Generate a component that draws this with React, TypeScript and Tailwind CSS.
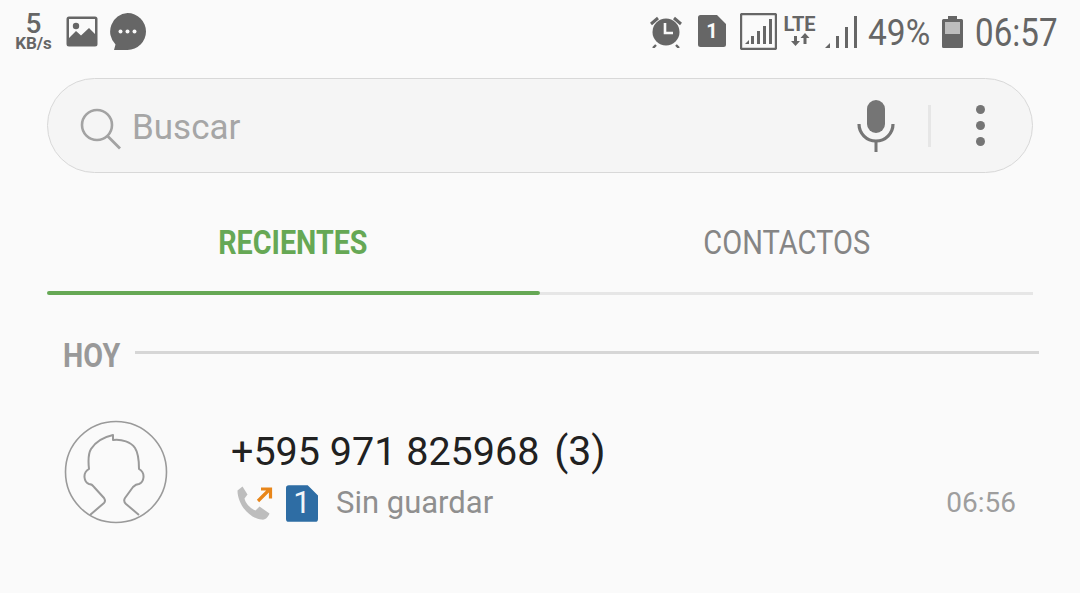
import React from 'react';

const grey = '#666666';

const ImageIcon = () => (
	<svg width="32" height="31" viewBox="0 0 32 31">
		<rect x="0.5" y="0.5" width="31" height="30" rx="2.5" fill={grey} />
		<rect x="3" y="3" width="26" height="22" fill="#fafafa" />
		<circle cx="10" cy="10" r="3.2" fill={grey} />
		<path d="M3 22 L10 15 L15 19.5 L23 12 L29 18 L29 26 L3 26 Z" fill={grey} />
	</svg>
);

const ChatIcon = () => (
	<svg width="37" height="37" viewBox="0 0 37 37">
		<path d="M18.5 0 A18.5 18.5 0 1 1 18.5 37 L5 37 L6.5 31.5 A18.5 18.5 0 0 1 18.5 0 Z" fill={grey} />
		<circle cx="11.5" cy="18.5" r="2" fill="#fafafa" />
		<circle cx="18.5" cy="18.5" r="2" fill="#fafafa" />
		<circle cx="25.5" cy="18.5" r="2" fill="#fafafa" />
	</svg>
);

const AlarmIcon = () => (
	<svg width="34" height="34" viewBox="0 0 34 34">
		<circle cx="17" cy="18" r="13.5" fill={grey} />
		<path d="M16 9 V19 H24" fill="none" stroke="#fafafa" strokeWidth="2.6" />
		<path d="M2 10 L9 4 M32 10 L25 4" stroke={grey} strokeWidth="3" />
		<path d="M7 31 L4 34 M27 31 L30 34" stroke={grey} strokeWidth="2.4" />
	</svg>
);

const SimIcon = ({ color, size }: { color: string; size: string }) => (
	<div className={`relative ${size}`}>
		<svg className="absolute inset-0 h-full w-full" viewBox="0 0 28 32">
			<path d="M2.5 0 H19 L28 9 V29.5 A2.5 2.5 0 0 1 25.5 32 H2.5 A2.5 2.5 0 0 1 0 29.5 V2.5 A2.5 2.5 0 0 1 2.5 0 Z" fill={color} />
		</svg>
	</div>
);

const SignalBox = () => (
	<svg width="37" height="37" viewBox="0 0 37 37">
		<rect x="1" y="1" width="35" height="35" rx="1.5" fill="none" stroke={grey} strokeWidth="2.4" />
		<path d="M5 31 L9 27 V31 Z" fill={grey} />
		<rect x="11" y="23" width="3" height="8" fill={grey} />
		<rect x="17" y="18" width="3" height="13" fill={grey} />
		<rect x="23" y="13" width="3" height="18" fill={grey} />
		<rect x="29" y="6" width="3" height="25" fill={grey} />
	</svg>
);

const LteIcon = () => (
	<div className="flex w-[33px] flex-col items-center">
		<span className="text-[20px] leading-[17px] font-bold text-[#666666]">LTE</span>
		<svg width="22" height="13" viewBox="0 0 20 13">
			<path d="M5.5 13 L1 8 H4 V3 H7 V8 H10 Z" fill={grey} />
			<path d="M15 0 L19.5 5 H16.5 V11 H13.5 V5 H10.5 Z" fill={grey} />
		</svg>
	</div>
);

const SignalIcon = () => (
	<svg width="32" height="32" viewBox="0 0 32 32">
		<path d="M0 32 L5 27 V32 Z" fill={grey} />
		<rect x="11" y="20" width="3" height="12" fill={grey} />
		<rect x="20" y="11" width="3" height="21" fill={grey} />
		<rect x="29" y="0" width="3" height="32" fill={grey} />
	</svg>
);

const BatteryIcon = () => (
	<svg width="21" height="32" viewBox="0 0 21 32">
		<path d="M6 0 H15 V3 H19.5 A1.5 1.5 0 0 1 21 4.5 V30.5 A1.5 1.5 0 0 1 19.5 32 H1.5 A1.5 1.5 0 0 1 0 30.5 V4.5 A1.5 1.5 0 0 1 1.5 3 H6 Z" fill={grey} />
		<rect x="3" y="6" width="15" height="12" fill="#bdbdbd" />
	</svg>
);

const SearchIcon = () => (
	<svg width="42" height="42" viewBox="0 0 42 42">
		<circle cx="17" cy="17" r="15" fill="none" stroke="#a3a3a3" strokeWidth="2.6" />
		<path d="M27.5 28 L40 40.5" stroke="#a3a3a3" strokeWidth="2.8" />
	</svg>
);

const MicIcon = () => (
	<svg width="38" height="52" viewBox="0 0 38 52">
		<rect x="10" y="0" width="18" height="33" rx="9" fill="#757575" />
		<path d="M2 24 A17 17 0 0 0 36 24" fill="none" stroke="#757575" strokeWidth="3.2" />
		<rect x="17.5" y="40" width="3" height="12" fill="#757575" />
	</svg>
);

const Avatar = () => (
	<svg width="104" height="104" viewBox="0 0 104 104">
		<circle cx="52" cy="52" r="50.5" fill="none" stroke="#9a9a9a" strokeWidth="1.6" />
		<path
			d="M26 95 L40 83 Q42 81 40 78 L30 67 Q28 64 25 64 C20 62 18 53 25 49 C24 40 24 34 27 29 C32 21 40 17 49 15 L49 20 C58 19 67 22 71 28 C75 34 75 42 75 49 C82 53 80 62 75 64 Q72 64 69 67 L61 78 Q59 81 62 84 L75 95"
			fill="none"
			stroke="#9a9a9a"
			strokeWidth="2"
			strokeLinejoin="round"
		/>
	</svg>
);

const CallOutIcon = () => (
	<svg width="36" height="36" viewBox="0 0 36 36">
		<path
			d="M1 5 L6 1 L11 9 L8 13 C9 18 14 23 19 25 L23 21 L33 28 C32 31 29 35 25 34 C13 33 1 19 1 5 Z"
			fill="#bdbdbd"
			transform="translate(-0.5,0.5)"
		/>
		<path d="M21 16 L32 5 M24 4 H33.5 V13.5" fill="none" stroke="#e8861a" strokeWidth="3.2" />
	</svg>
);

const App: React.FC = () => {
	return (
		<div className="h-[593px] w-[1080px] overflow-hidden bg-[#fafafa] font-['Roboto',sans-serif]">
			{/* status bar */}
			<div className="flex h-[62px] items-center pl-[15px] pr-[22px]">
				<div className="mr-[14px] flex w-[37px] flex-col items-center text-[#666666]">
					<span className="text-[28px] leading-[22px] font-medium">5</span>
					<span className="mt-[1px] text-[17px] leading-[14px] font-bold">KB/s</span>
				</div>
				<ImageIcon />
				<div className="ml-[11px]">
					<ChatIcon />
				</div>
				<div className="flex-1" />
				<AlarmIcon />
				<div className="relative ml-[15px] h-[32px] w-[28px]">
					<SimIcon color="#666666" size="h-[32px] w-[28px]" />
					<span className="absolute inset-0 flex items-center justify-center text-[20px] font-bold text-[#fafafa]">1</span>
				</div>
				<div className="ml-[14px]">
					<SignalBox />
				</div>
				<div className="ml-[6px]">
					<LteIcon />
				</div>
				<div className="ml-[9px] mt-[2px]">
					<SignalIcon />
				</div>
				<span className="ml-[11px] mt-[4px] w-[62px] origin-left scale-x-[0.93] text-[36px] leading-none whitespace-nowrap text-[#666666]">49%</span>
				<div className="ml-[12px] mt-[2px]">
					<BatteryIcon />
				</div>
				<span className="ml-[12px] mt-[4px] w-[83px] origin-left scale-x-[0.85] text-[39px] leading-none whitespace-nowrap text-[#666666]">06:57</span>
			</div>

			{/* search */}
			<div className="mx-[47px] mt-[16px] flex h-[95px] w-[986px] items-center rounded-full border border-[#d8d8d8] bg-[#f5f5f5] pl-[32px]">
				<div className="mt-[6px]">
					<SearchIcon />
				</div>
				<span className="ml-[10px] mt-[6px] flex-1 text-[35px] text-[#a6a6a6]">Buscar</span>
				<MicIcon />
				<div className="ml-[33px] h-[42px] w-[3px] bg-[#e6e6e6]" />
				<div className="ml-[45px] mr-[47px] flex flex-col gap-[7px]">
					<div className="h-[9px] w-[9px] rounded-full bg-[#757575]" />
					<div className="h-[9px] w-[9px] rounded-full bg-[#757575]" />
					<div className="h-[9px] w-[9px] rounded-full bg-[#757575]" />
				</div>
			</div>

			{/* tabs */}
			<div className="mx-[47px] mt-[47px] grid w-[986px] grid-cols-2">
				<div className="flex flex-col items-center">
					<span className="mr-[2px] scale-x-[0.87] text-[33px] leading-[46px] font-bold text-[#66a855]">RECIENTES</span>
					<div className="mt-[25px] h-[4px] w-full rounded-full bg-[#66a855]" />
				</div>
				<div className="flex flex-col items-center">
					<span className="scale-x-[0.88] text-[33px] leading-[46px] text-[#858585]">CONTACTOS</span>
					<div className="mt-[26px] h-[3px] w-full bg-[#e6e6e6]" />
				</div>
			</div>

			{/* section header */}
			<div className="mt-[38px] flex h-[46px] items-center pl-[63px] pr-[41px]">
				<span className="w-[72px] origin-left scale-x-[0.87] text-[33px] leading-[46px] font-bold text-[#999999]">HOY</span>
				<div className="mb-[8px] h-[3px] flex-1 bg-[#d6d6d6]" />
			</div>

			{/* log row */}
			<div className="mt-[41px] flex pl-[64px] pr-[64px]">
				<Avatar />
				<div className="ml-[63px] flex flex-1 flex-col">
					<span className="mt-[8px] text-[39.5px] leading-[46px] whitespace-nowrap text-[#212121]">
						+595 971 825968 <span className="ml-[5px] text-[41px]">(3)</span>
					</span>
					<div className="mt-[5px] ml-[6px] flex items-center">
						<CallOutIcon />
						<div className="relative ml-[13px] h-[39px] w-[32px]">
							<SimIcon color="#2e6da4" size="h-[39px] w-[32px]" />
							<span className="absolute inset-0 flex items-center justify-center text-[31px] text-[#f2f6fa]">1</span>
						</div>
						<span className="ml-[18px] flex-1 text-[31px] text-[#8f8f8f]">Sin guardar</span>
						<span className="text-[28px] text-[#9e9e9e]">06:56</span>
					</div>
				</div>
			</div>
		</div>
	);
};

export default App;
